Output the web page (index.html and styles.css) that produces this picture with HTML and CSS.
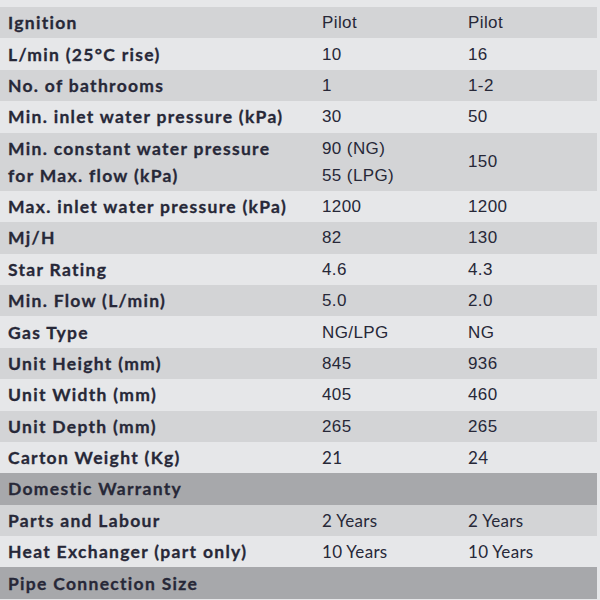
FILE: index.html
```html
<!DOCTYPE html>
<html>
<head>
<meta charset="utf-8">
<link rel="stylesheet" href="styles.css">
</head>
<body>
<div class="sheet">
  <div class="row dark"><div class="lbl">Ignition</div><div class="val">Pilot</div><div class="val">Pilot</div></div>
  <div class="row"><div class="lbl">L/min (25°C rise)</div><div class="val">10</div><div class="val">16</div></div>
  <div class="row dark"><div class="lbl">No. of bathrooms</div><div class="val">1</div><div class="val">1-2</div></div>
  <div class="row"><div class="lbl">Min. inlet water pressure (kPa)</div><div class="val">30</div><div class="val">50</div></div>
  <div class="row dark"><div class="lbl">Min. constant water pressure<br>for Max. flow (kPa)</div><div class="val">90 (NG)<br>55 (LPG)</div><div class="val">150</div></div>
  <div class="row"><div class="lbl">Max. inlet water pressure (kPa)</div><div class="val">1200</div><div class="val">1200</div></div>
  <div class="row dark"><div class="lbl">Mj/H</div><div class="val">82</div><div class="val">130</div></div>
  <div class="row"><div class="lbl">Star Rating</div><div class="val">4.6</div><div class="val">4.3</div></div>
  <div class="row dark"><div class="lbl">Min. Flow (L/min)</div><div class="val">5.0</div><div class="val">2.0</div></div>
  <div class="row"><div class="lbl">Gas Type</div><div class="val">NG/LPG</div><div class="val">NG</div></div>
  <div class="row dark"><div class="lbl">Unit Height (mm)</div><div class="val">845</div><div class="val">936</div></div>
  <div class="row"><div class="lbl">Unit Width (mm)</div><div class="val">405</div><div class="val">460</div></div>
  <div class="row dark"><div class="lbl">Unit Depth (mm)</div><div class="val">265</div><div class="val">265</div></div>
  <div class="row"><div class="lbl">Carton Weight (Kg)</div><div class="val soft">21</div><div class="val soft">24</div></div>
  <div class="row head"><div class="lbl">Domestic Warranty</div><div class="val"></div><div class="val"></div></div>
  <div class="row dark"><div class="lbl">Parts and Labour</div><div class="val soft">2 Years</div><div class="val soft">2 Years</div></div>
  <div class="row"><div class="lbl">Heat Exchanger (part only)</div><div class="val soft">10 Years</div><div class="val soft">10 Years</div></div>
  <div class="row head"><div class="lbl">Pipe Connection Size</div><div class="val"></div><div class="val"></div></div>
</div>
</body>
</html>
```

FILE: styles.css
```css
html, body {
  margin: 0;
  padding: 0;
  background: #e6e7e9;
}
body {
  width: 600px;
  height: 600px;
  overflow: hidden;
}
.sheet {
  width: 597px;
  padding-top: 7px;
  color: #272838;
}
.row {
  display: grid;
  grid-template-columns: 322px 146px 1fr;
  align-items: center;
  padding: 2.2px 0;
  line-height: 27px;
  background: #e6e7e9;
}
.row.dark {
  background: #d3d4d6;
}
.row.head {
  background: #a7a8ab;
}
.lbl {
  padding-left: 8px;
  font-family: Lato, "Liberation Sans", sans-serif;
  font-weight: 700;
  font-size: 17.5px;
  letter-spacing: 1.3px;
  -webkit-text-stroke: 0.3px #272838;
}
.val {
  font-family: "Liberation Sans", Arial, sans-serif;
  font-size: 17px;
  letter-spacing: 0.4px;
}
.val.soft {
  font-family: Lato, "Liberation Sans", sans-serif;
  font-size: 17px;
  letter-spacing: 0.3px;
}
```
